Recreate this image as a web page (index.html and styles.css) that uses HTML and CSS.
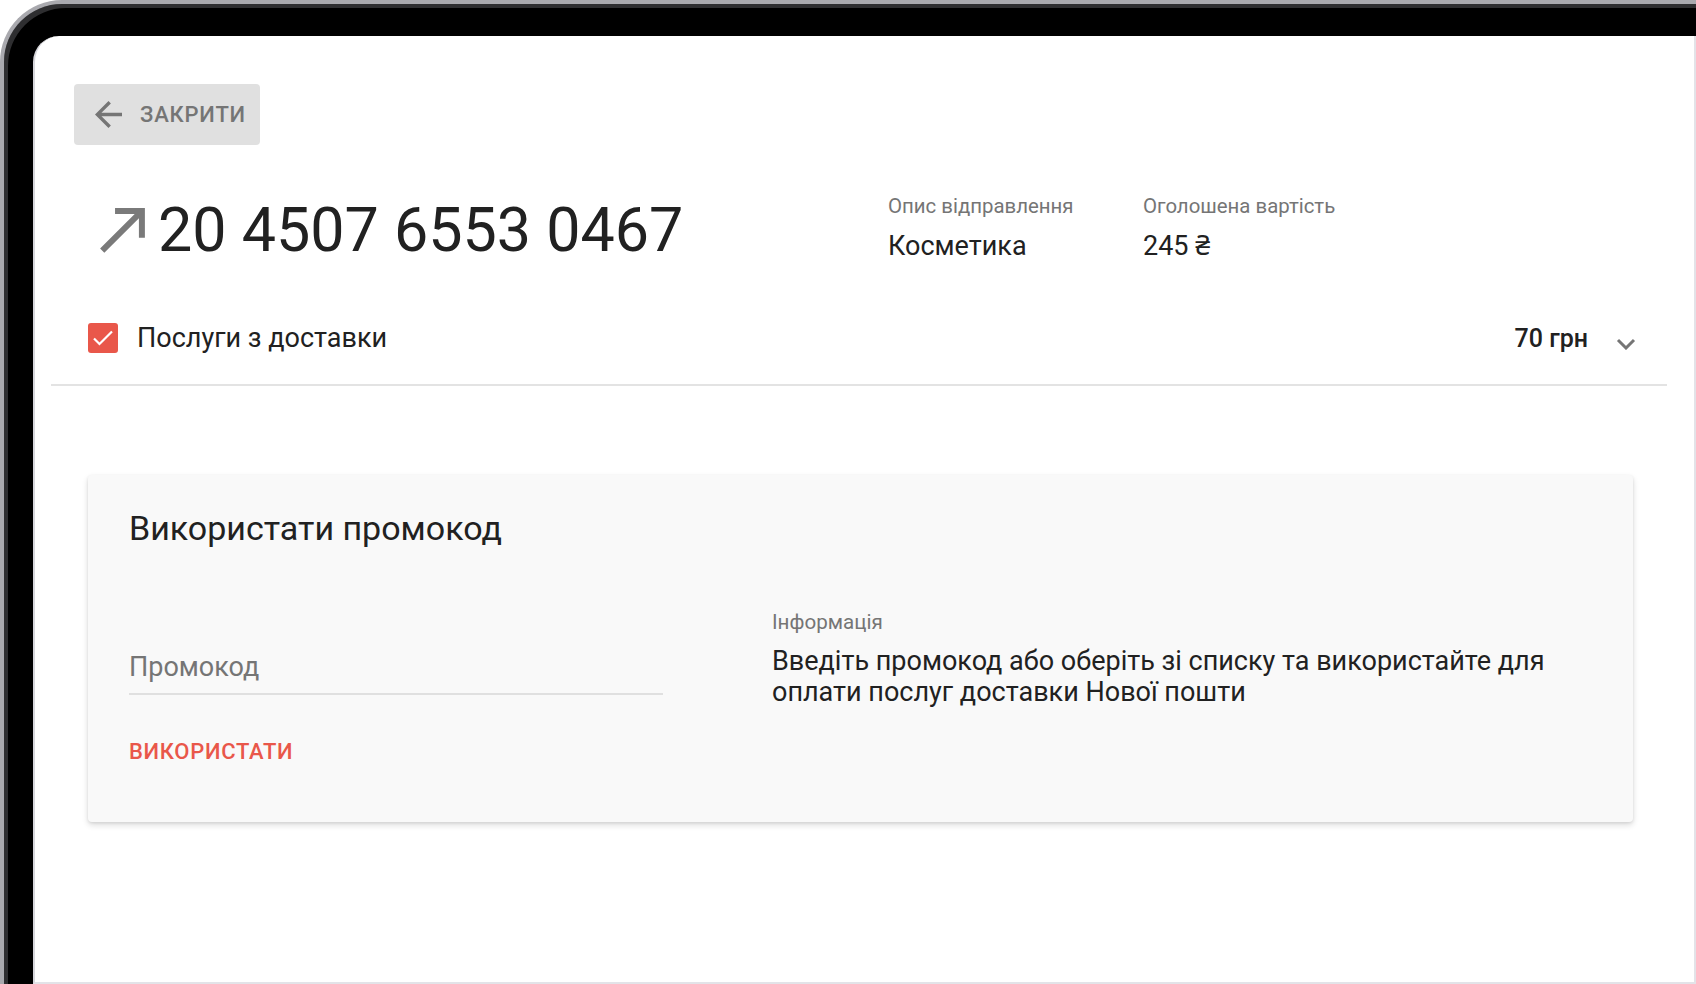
FILE: index.html
```html
<!DOCTYPE html>
<html lang="uk">
<head>
    <meta charset="UTF-8" />
    <meta name="viewport" content="width=device-width, initial-scale=1.0"/>
    <title>Використати промокод</title>
    <link rel="stylesheet" href="styles.css">
</head>
<body>
<div class="device">
    <div class="screen">
        <button class="btn-close">
            <svg class="icon-back" viewBox="4 4 16 16" width="27" height="27">
                <path d="M20 11H7.83l5.59-5.59L12 4l-8 8 8 8 1.41-1.41L7.83 13H20v-2z" fill="currentColor"/>
            </svg>
            <span>Закрити</span>
        </button>

        <div class="summary">
            <div class="tracking">
                <svg class="icon-outgoing" viewBox="4 5 15 15.41" width="45" height="46">
                    <path d="M9 5v2h6.59L4 18.59 5.41 20 17 8.41V15h2V5z" fill="currentColor"/>
                </svg>
                <span class="tracking-number">20 4507 6553 0467</span>
            </div>
            <div class="meta-item">
                <div class="meta-label">Опис відправлення</div>
                <div class="meta-value">Косметика</div>
            </div>
            <div class="meta-item">
                <div class="meta-label">Оголошена вартість</div>
                <div class="meta-value">245 ₴</div>
            </div>
        </div>

        <div class="services">
            <span class="checkbox">
                <svg viewBox="0 0 30 30" width="30" height="30">
                    <polyline points="6,15.5 11.5,21 24,8.5" fill="none" stroke="#fff" stroke-width="2.2"/>
                </svg>
            </span>
            <span class="services-label">Послуги з доставки</span>
            <span class="services-price">70 грн</span>
            <svg class="icon-chevron" viewBox="0 0 20 12" width="20" height="12">
                <polyline points="2,2 10,10 18,2" fill="none" stroke="currentColor" stroke-width="3"/>
            </svg>
        </div>

        <div class="promo-card">
            <h2>Використати промокод</h2>
            <div class="promo-body">
                <div class="promo-form">
                    <input class="promo-input" type="text" placeholder="Промокод">
                    <button class="btn-apply">Використати</button>
                </div>
                <div class="promo-info">
                    <div class="info-label">Інформація</div>
                    <p class="info-text">Введіть промокод або оберіть зі списку та використайте для оплати послуг доставки Нової пошти</p>
                </div>
            </div>
        </div>
    </div>
</div>
</body>
</html>
```

FILE: styles.css
```css
:root {
    --text: #212121;
    --text-light: #757575;
    --border: #e3e3e3;
    --accent: #e9574a;
    --card-bg: #f9f9f9;
}

html, body {
    height: 100%;
}

body {
    margin: 0;
    background: #fff;
    font-family: Roboto, 'Noto Sans', sans-serif;
    color: var(--text);
    overflow: hidden;
}

/* device bezel */
.device {
    height: 100vh;
    box-sizing: border-box;
    display: flex;
    padding: 32px 0 0 29px;
    background: #000;
    border-top: 4px solid #a9a9ae;
    border-left: 4px solid #a9a9ae;
    border-top-left-radius: 62px;
    box-shadow: inset 4px 4px 0 #2e2e30;
}

.screen {
    flex: 1;
    background: #fff;
    border-left: 2px solid #d6d6db;
    border-right: 2px solid #e3e3e8;
    border-bottom: 2px solid #e3e3e8;
    border-top-left-radius: 26px;
    padding: 48px 27px 0 16px;
}

/* close button */
.btn-close {
    display: flex;
    align-items: center;
    gap: 18px;
    width: 186px;
    height: 61px;
    margin-left: 23px;
    padding: 0 0 0 21px;
    border: none;
    border-radius: 4px;
    background: #e0e0e0;
    color: var(--text-light);
    font-family: inherit;
    font-size: 22px;
    font-weight: 500;
    letter-spacing: 0.8px;
    text-transform: uppercase;
    cursor: pointer;
}

.icon-back {
    flex: none;
}

/* shipment summary */
.summary {
    display: flex;
    align-items: flex-start;
    margin-top: 49px;
    padding-left: 49px;
}

.tracking {
    flex: 0 0 788px;
    display: flex;
    align-items: flex-start;
    gap: 13px;
}

.icon-outgoing {
    color: #7a7a7a;
    margin-top: 14px;
}

.tracking-number {
    font-size: 61px;
    line-height: 72px;
}

.meta-item {
    width: 255px;
}

.meta-label {
    font-size: 20.4px;
    line-height: 24px;
    color: var(--text-light);
}

.meta-value {
    margin-top: 12px;
    font-size: 27px;
    line-height: 32px;
}

/* delivery services row */
.services {
    display: flex;
    align-items: center;
    margin-top: 41px;
    padding: 15px 31px 30px 37px;
    border-bottom: 2px solid var(--border);
}

.checkbox {
    display: flex;
    width: 30px;
    height: 30px;
    border-radius: 3px;
    background: var(--accent);
}

.services-label {
    flex: 1;
    margin-left: 19px;
    font-size: 27px;
}

.services-price {
    font-size: 25px;
    font-weight: 500;
}

.icon-chevron {
    margin-left: 28px;
    margin-top: 12px;
    color: var(--text-light);
}

/* promo code card */
.promo-card {
    margin: 89px 34px 0 37px;
    padding: 35px 41px 57px;
    background: var(--card-bg);
    border-radius: 4px;
    box-shadow: 0 3px 6px rgba(0, 0, 0, 0.14), 0 1px 3px rgba(0, 0, 0, 0.08);
}

.promo-card h2 {
    margin: 0;
    font-size: 34px;
    font-weight: 400;
    line-height: 36px;
}

.promo-body {
    display: flex;
    gap: 109px;
    margin-top: 64px;
}

.promo-form {
    flex: 0 0 534px;
    padding-top: 41px;
}

.promo-input {
    display: block;
    width: 100%;
    box-sizing: border-box;
    padding: 0 0 10px;
    border: none;
    border-bottom: 2px solid #e0e0e0;
    background: transparent;
    font-family: inherit;
    font-size: 27px;
    line-height: 32px;
    height: 44px;
    color: var(--text);
    outline: none;
}

.promo-input::placeholder {
    color: var(--text-light);
    opacity: 1;
}

.btn-apply {
    display: block;
    margin-top: 44px;
    padding: 0;
    border: none;
    background: none;
    color: var(--accent);
    font-family: inherit;
    font-size: 22px;
    font-weight: 500;
    line-height: 26px;
    letter-spacing: 0.7px;
    text-transform: uppercase;
    cursor: pointer;
}

.promo-info {
    flex: 0 1 800px;
}

.info-label {
    font-size: 20.6px;
    line-height: 24px;
    color: var(--text-light);
}

.info-text {
    margin: 12px 0 0;
    font-size: 27px;
    line-height: 31px;
}
```
